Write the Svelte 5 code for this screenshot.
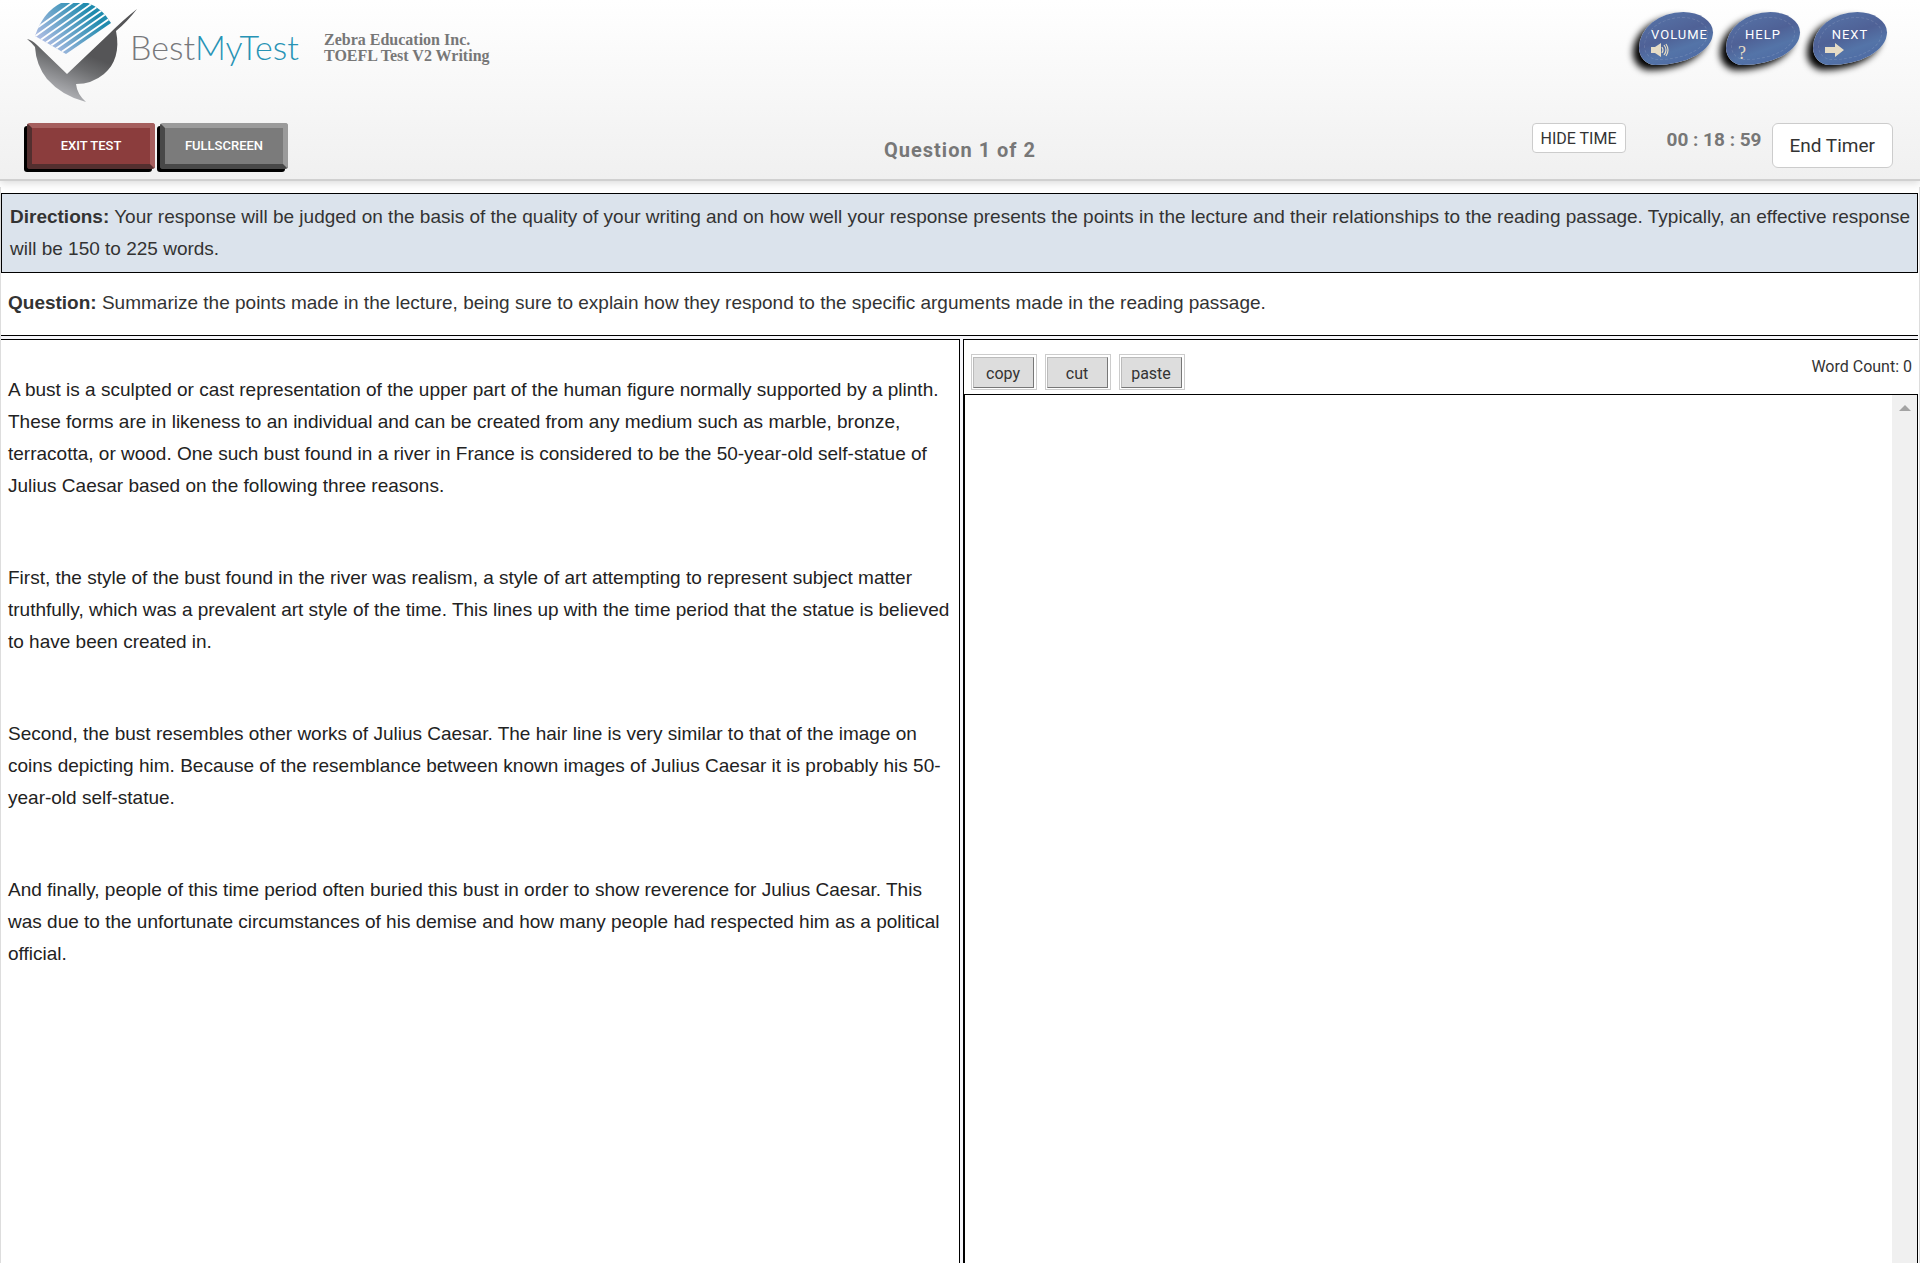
<script lang="ts">
  let remaining = $state(18 * 60 + 59);
  let timeVisible = $state(true);
  let response = $state('');
  let editor: HTMLTextAreaElement;

  const pad = (n: number) => String(n).padStart(2, '0');

  const clock = $derived(
    [Math.floor(remaining / 3600), Math.floor(remaining / 60) % 60, remaining % 60].map(pad).join(' : '),
  );
  const wordCount = $derived(response.split(/\s+/).filter(Boolean).length);

  const passage = [
    'A bust is a sculpted or cast representation of the upper part of the human figure normally supported by a plinth. These forms are in likeness to an individual and can be created from any medium such as marble, bronze, terracotta, or wood. One such bust found in a river in France is considered to be the 50-year-old self-statue of Julius Caesar based on the following three reasons.',
    'First, the style of the bust found in the river was realism, a style of art attempting to represent subject matter truthfully, which was a prevalent art style of the time. This lines up with the time period that the statue is believed to have been created in.',
    'Second, the bust resembles other works of Julius Caesar. The hair line is very similar to that of the image on coins depicting him. Because of the resemblance between known images of Julius Caesar it is probably his 50-year-old self-statue.',
    'And finally, people of this time period often buried this bust in order to show reverence for Julius Caesar. This was due to the unfortunate circumstances of his demise and how many people had respected him as a political official.',
  ];

  let clipboard = '';

  function copy(): void {
    clipboard = response.slice(editor.selectionStart, editor.selectionEnd);
  }

  function cut(): void {
    copy();
    response = response.slice(0, editor.selectionStart) + response.slice(editor.selectionEnd);
  }

  function paste(): void {
    response = response.slice(0, editor.selectionStart) + clipboard + response.slice(editor.selectionEnd);
  }
</script>

<div class="page">
  <header class="header">
    <div class="top-row">
      <a class="logo" href="/" aria-label="BestMyTest">
        <svg class="logo-mark" viewBox="24 0 116 104" aria-hidden="true">
          <defs>
            <linearGradient id="sky" gradientUnits="userSpaceOnUse" x1="92" y1="12" x2="50" y2="50">
              <stop offset="0" stop-color="#1f8bae" />
              <stop offset="1" stop-color="#abbbe2" />
            </linearGradient>
            <linearGradient id="slate" gradientUnits="userSpaceOnUse" x1="96" y1="58" x2="78" y2="104">
              <stop offset="0" stop-color="#555557" />
              <stop offset="0.3" stop-color="#6b6c6e" />
              <stop offset="1" stop-color="#b4b5b9" />
            </linearGradient>
            <clipPath id="dome">
              <path d="M35 36 Q43 12 61 3 H88 Q102 8 111 23 L66 54 Z" />
            </clipPath>
          </defs>
          <path d="M35 36 Q43 12 61 3 H88 Q102 8 111 23 L66 54 Z" fill="url(#sky)" />
          <g clip-path="url(#dome)" stroke="#fff" stroke-width="1.8">
            <path d="M34 30 L76 0" />
            <path d="M34 37 L86 0" />
            <path d="M39 41 L97 0" />
            <path d="M44 44 L104 2" />
            <path d="M49 47 L108 6" />
            <path d="M54 50 L110 11" />
            <path d="M60 53 L112 17" />
          </g>
          <path
            d="M27 39 Q32 40 37 45 L67 74 L108 35 Q123 20 137 9 Q127 22 116 31 C120 50 115 65 104 74 Q92 84 76 84 Q77 94 86 102 Q62 96 47 79 Q36 65 35 47 Q32 43 27 39 Z"
            fill="url(#slate)"
          />
        </svg>
        <span class="logo-text">Best<span class="logo-accent">MyTest</span></span>
      </a>
      <h1 class="test-name">Zebra Education Inc.<br />TOEFL Test V2 Writing</h1>
      <nav class="pebbles">
        <button class="pebble" type="button">
          <span class="pebble-label">VOLUME</span>
          <svg class="pebble-icon" viewBox="0 0 20 14" aria-hidden="true">
            <path d="M0 4h4l6-4v14l-6-4H0z" fill="#e6dcc6" />
            <path
              d="M11 4q2 3 0 6M13 2q4 5 0 10M15 1q4 6 0 12"
              fill="none"
              stroke="#e6dcc6"
              stroke-width="1.2"
            />
          </svg>
        </button>
        <button class="pebble" type="button">
          <span class="pebble-label">HELP</span>
          <span class="pebble-mark" aria-hidden="true">?</span>
        </button>
        <button class="pebble" type="button">
          <span class="pebble-label">NEXT</span>
          <svg class="pebble-icon" viewBox="0 0 20 14" aria-hidden="true">
            <path d="M0 4h10V0l9 7-9 7v-4H0z" fill="#e6dcc6" />
          </svg>
        </button>
      </nav>
    </div>

    <div class="bottom-row">
      <div class="session">
        <button class="bevel bevel--exit" type="button">EXIT TEST</button>
        <button class="bevel" type="button">FULLSCREEN</button>
      </div>
      <h2 class="progress">Question 1 of 2</h2>
      <div class="timer">
        <button class="hide-time" type="button" onclick={() => (timeVisible = !timeVisible)}>
          {timeVisible ? 'HIDE TIME' : 'SHOW TIME'}
        </button>
        <div class="timer-end">
          {#if timeVisible}<span class="clock">{clock}</span>{/if}
          <button class="end-timer" type="button" onclick={() => (remaining = 0)}>End Timer</button>
        </div>
      </div>
    </div>
  </header>

  <main class="content">
    <p class="directions">
      <strong>Directions:</strong> Your response will be judged on the basis of the quality of your writing and on how
      well your response presents the points in the lecture and their relationships to the reading passage. Typically,
      an effective response will be 150 to 225 words.
    </p>
    <p class="question">
      <strong>Question:</strong> Summarize the points made in the lecture, being sure to explain how they respond to the
      specific arguments made in the reading passage.
    </p>

    <div class="panes">
      <article class="passage">
        {#each passage as paragraph}
          <p>{paragraph}</p>
        {/each}
      </article>

      <section class="answer">
        <div class="toolbar">
          <span class="tool"><button type="button" onclick={copy}>copy</button></span>
          <span class="tool"><button type="button" onclick={cut}>cut</button></span>
          <span class="tool"><button type="button" onclick={paste}>paste</button></span>
          <span class="word-count">Word Count: {wordCount}</span>
        </div>
        <div class="editor">
          <textarea bind:this={editor} bind:value={response} aria-label="Your response"></textarea>
          <div class="track" aria-hidden="true">
            <svg viewBox="0 0 12 6"><path d="M0 6 6 0l6 6z" fill="#a3a3a3" /></svg>
          </div>
        </div>
      </section>
    </div>
  </main>
</div>

<style>
  :global(body) {
    margin: 0;
    background: #fff;
  }

  .page {
    display: flex;
    flex-direction: column;
    min-height: 100vh;
    color: #333;
    font-family: Roboto, 'Liberation Sans', sans-serif;
  }

  .page *,
  .page {
    box-sizing: border-box;
  }

  button {
    font-family: inherit;
    cursor: pointer;
  }

  h1,
  h2,
  p {
    margin: 0;
  }

  .header {
    position: relative;
    height: 181px;
    border-bottom: 2px solid #d0d0d0;
    background: linear-gradient(#fff, #f0f0f0);
    box-shadow: 0 2px 8px rgba(0, 0, 0, 0.15);
  }

  .top-row {
    display: flex;
    align-items: flex-start;
    height: 123px;
    padding: 0 33px 0 24px;
  }

  .logo {
    display: flex;
    width: 300px;
    text-decoration: none;
  }

  .logo-mark {
    flex: none;
    width: 116px;
    height: 104px;
  }

  .logo-text {
    margin-left: -10px;
    padding-top: 27px;
    color: #77787b;
    font: 300 34px/40px Lato, 'Open Sans', sans-serif;
  }

  .logo-accent {
    color: #2793b5;
  }

  .test-name {
    padding-top: 32px;
    color: #777;
    font: bold 16px/16px 'Liberation Serif', serif;
  }

  .pebbles {
    display: flex;
    gap: 13px;
    margin-left: auto;
    padding-top: 12px;
  }

  .pebble {
    position: relative;
    display: flex;
    flex-direction: column;
    align-items: flex-start;
    width: 74px;
    height: 53px;
    padding: 15px 12px 0;
    border: 0;
    border-radius: 60% 40% 78% 22% / 68% 38% 62% 32%;
    background: linear-gradient(160deg, #5878ac, #4f6196 45%, #5474a8 65%, #4a64a0);
    box-shadow: -6px 5px 7px #000;
    color: #fff;
  }

  .pebble::after {
    content: '';
    position: absolute;
    inset: 5px;
    border: 1px dashed rgba(255, 255, 255, 0.12);
    border-radius: inherit;
  }

  .pebble-label {
    min-width: 100%;
    font-size: 13px;
    font-weight: 400;
    line-height: 16px;
    letter-spacing: 1px;
  }

  .pebble-icon {
    width: 20px;
    height: 14px;
  }

  .pebble-mark {
    color: #e6dcc6;
    font: 18px/20px 'Liberation Serif', serif;
  }

  .bottom-row {
    display: grid;
    grid-template-columns: 1fr auto 1fr;
    align-items: start;
    padding: 0 27px;
  }

  .session {
    display: flex;
    gap: 5px;
  }

  .bevel {
    width: 128px;
    height: 46px;
    padding: 0 0 2px;
    border: 5px solid;
    border-color: #9b9b9b #9b9b9b #484848 #484848;
    border-radius: 3px;
    background: #7b7b7b;
    box-shadow: -3px 3px 0 #000;
    color: #fff;
    font-size: 13px;
    font-weight: 500;
  }

  .bevel--exit {
    border-color: #a55f5e #a55f5e #532f2f #532f2f;
    background: #8b3d3d;
  }

  .progress {
    padding-top: 15px;
    color: #777;
    font-size: 20px;
    font-weight: 700;
    line-height: 24px;
    letter-spacing: 1px;
  }

  .timer {
    display: flex;
    align-items: flex-start;
    justify-content: flex-end;
    gap: 41px;
  }

  .hide-time,
  .end-timer {
    border: 1px solid #ccc;
    background: #fff;
    color: #333;
  }

  .hide-time {
    height: 30px;
    padding: 0 8px;
    border-radius: 4px;
    font-size: 16px;
  }

  .timer-end {
    display: flex;
    gap: 10px;
  }

  .clock {
    padding-top: 5px;
    color: #777;
    font-size: 19px;
    font-weight: 700;
    line-height: 24px;
  }

  .end-timer {
    height: 45px;
    padding: 0 17px;
    border-radius: 6px;
    font-size: 19px;
  }

  .content {
    flex: 1;
    display: flex;
    flex-direction: column;
    margin-top: 6px;
    padding: 6px 1px 0 0;
    border: solid #ddd;
    border-width: 0 1px;
    font: 19px/32px 'Liberation Sans', Arial, sans-serif;
  }

  .directions {
    padding: 7px 0 7px 8px;
    border: 1px solid #000;
    background: #dbe3ec;
  }

  .question {
    padding: 14px 7px 16px;
  }

  .panes {
    flex: 1;
    display: grid;
    grid-template-columns: 50% 1fr;
    gap: 3px;
    padding-top: 3px;
    border-top: 1px solid #000;
    background: #f6f6fa;
  }

  .passage,
  .answer {
    border: solid #000;
    background: #fff;
  }

  .passage {
    display: flex;
    flex-direction: column;
    gap: 60px;
    padding: 34px 7px;
    border-width: 1px 1px 0 0;
    color: #222;
  }

  .answer {
    display: flex;
    flex-direction: column;
    border-width: 1px 0 0 1px;
    font-family: Roboto, sans-serif;
  }

  .toolbar {
    display: flex;
    gap: 8px;
    height: 54px;
    padding: 14px 6px 4px 7px;
  }

  .tool {
    display: flex;
    width: 66px;
    height: 36px;
    padding: 2px 2px 1px 1px;
    border: 1px solid #ccc;
  }

  .tool button {
    flex: 1;
    padding: 2px 0 0;
    border: 1px solid;
    border-color: #bbb #777 #777 #bbb;
    background: #ddd;
    color: #333;
    font-size: 16px;
  }

  .word-count {
    margin-left: auto;
    font-size: 16px;
    line-height: 26px;
  }

  .editor {
    flex: 1;
    display: flex;
    border: solid #000;
    border-width: 1px 1px 0;
  }

  textarea {
    flex: 1;
    padding: 8px;
    border: 0;
    outline: 0;
    background: #fff;
    color: #333;
    font: 19px/32px 'Liberation Sans', Arial, sans-serif;
    resize: none;
  }

  .track {
    display: flex;
    justify-content: center;
    width: 25px;
    padding-top: 10px;
    background: #f0f0f0;
  }

  .track svg {
    width: 12px;
    height: 6px;
  }
</style>
